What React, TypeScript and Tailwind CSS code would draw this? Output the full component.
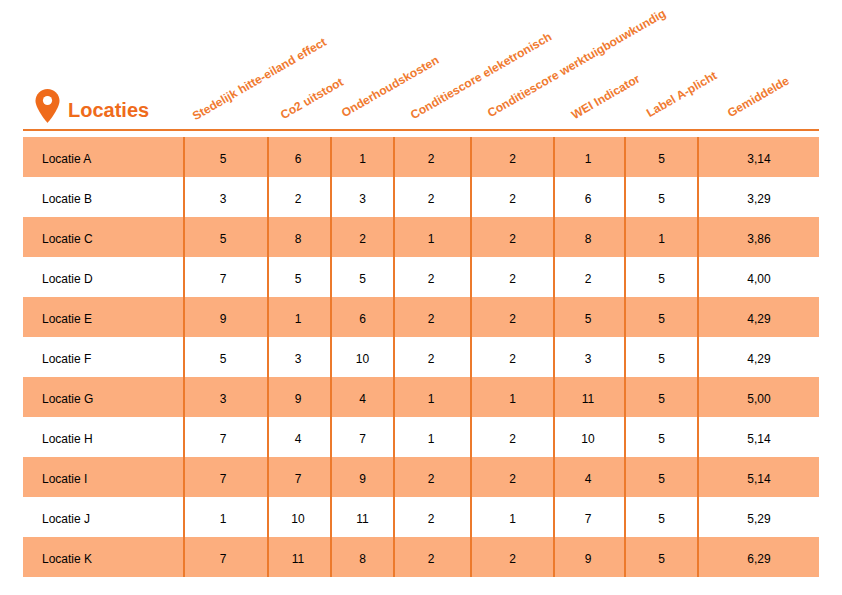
const COLUMNS = [
  { label: "Stedelijk hitte-eiland effect", width: 84, pad: 14, shift: 3 },
  { label: "Co2 uitstoot", width: 63, pad: 18, shift: 2 },
  { label: "Onderhoudskosten", width: 63, pad: 16, shift: 0 },
  { label: "Conditiescore eleketronisch", width: 77, pad: 22, shift: 2 },
  { label: "Conditiescore werktuigbouwkundig", width: 83, pad: 22, shift: 0 },
  { label: "WEI Indicator", width: 71, pad: 23, shift: 2 },
  { label: "Label A-plicht", width: 73, pad: 27, shift: 0 },
  { label: "Gemiddelde", width: 122, pad: 35, shift: 0 },
];

const ROWS: [string, (number | string)[]][] = [
  ["Locatie A", [5, 6, 1, 2, 2, 1, 5, "3,14"]],
  ["Locatie B", [3, 2, 3, 2, 2, 6, 5, "3,29"]],
  ["Locatie C", [5, 8, 2, 1, 2, 8, 1, "3,86"]],
  ["Locatie D", [7, 5, 5, 2, 2, 2, 5, "4,00"]],
  ["Locatie E", [9, 1, 6, 2, 2, 5, 5, "4,29"]],
  ["Locatie F", [5, 3, 10, 2, 2, 3, 5, "4,29"]],
  ["Locatie G", [3, 9, 4, 1, 1, 11, 5, "5,00"]],
  ["Locatie H", [7, 4, 7, 1, 2, 10, 5, "5,14"]],
  ["Locatie I", [7, 7, 9, 2, 2, 4, 5, "5,14"]],
  ["Locatie J", [1, 10, 11, 2, 1, 7, 5, "5,29"]],
  ["Locatie K", [7, 11, 8, 2, 2, 9, 5, "6,29"]],
];

const PinIcon = () => (
  <svg width="25" height="34" viewBox="0 0 24 34" className="shrink-0">
    <path
      d="M12 0C5.4 0 0 5.3 0 11.8 0 20.2 12 34 12 34s12-13.8 12-22.2C24 5.3 18.6 0 12 0z"
      fill="#ef6b1b"
    />
    <circle cx="12" cy="11.5" r="4.6" fill="#ffffff" />
  </svg>
);

export default function App() {
  return (
    <div
      className="w-[842px] h-[595px] bg-white px-[23px]"
      style={{ fontFamily: '"Liberation Sans", Arial, sans-serif' }}
    >
      <div className="w-[796px]">
        {/* header */}
        <div className="flex h-[131px] border-b-2 border-[#ec7a2c]">
          <div className="w-[160px] flex items-end gap-[8px] pl-[12px] pb-[6px]">
            <PinIcon />
            <span className="text-[20px] font-bold text-[#ef6b1b] leading-none mb-[3px]">
              Locaties
            </span>
          </div>
          {COLUMNS.map((col, i) => (
            <div
              key={i}
              className="flex items-end"
              style={{ width: col.width, paddingLeft: col.pad, paddingBottom: 7 - col.shift + 2 }}
            >
              <span className="inline-block origin-bottom-left -rotate-[30deg] whitespace-nowrap text-[12px] font-bold leading-[14px] text-[#f07a30]">
                {col.label}
              </span>
            </div>
          ))}
        </div>

        {/* rows */}
        <div className="mt-[6px] flex flex-col">
          {ROWS.map(([name, vals], r) => (
            <div
              key={name}
              className={`flex h-[40px] text-[12px] text-black ${
                r % 2 === 0 ? "bg-[#fcae7e]" : "bg-white"
              }`}
            >
              <div className="w-[160px] flex items-center pl-[19px] pt-[3px]">{name}</div>
              {vals.map((v, i) => (
                <div
                  key={i}
                  className={`flex items-center justify-center border-l-2 border-[#ec7a2c] pt-[3px] ${
                    i === 0 ? "pr-[6px]" : i === 1 || i === 3 || i === 5 ? "pr-[3px]" : ""
                  }`}
                  style={{ width: COLUMNS[i].width }}
                >
                  {v}
                </div>
              ))}
            </div>
          ))}
        </div>
      </div>
    </div>
  );
}
